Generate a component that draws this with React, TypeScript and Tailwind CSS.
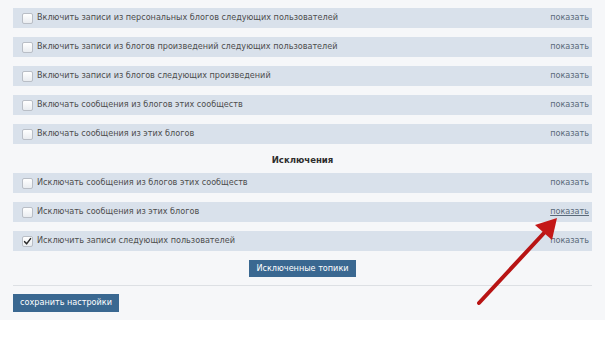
import React from 'react';

type Row = { label: string; checked?: boolean; hover?: boolean };

const includeRows: Row[] = [
  { label: 'Включить записи из персональных блогов следующих пользователей' },
  { label: 'Включить записи из блогов произведений следующих пользователей' },
  { label: 'Включить записи из блогов следующих произведений' },
  { label: 'Включать сообщения из блогов этих сообществ' },
  { label: 'Включать сообщения из этих блогов' },
];

const excludeRows: Row[] = [
  { label: 'Исключать сообщения из блогов этих сообществ' },
  { label: 'Исключать сообщения из этих блогов', hover: true },
  { label: 'Исключить записи следующих пользователей', checked: true },
];

function Checkbox({ checked }: { checked?: boolean }) {
  return (
    <span className="flex h-[11px] w-[11px] shrink-0 items-center justify-center rounded-[2px] border border-[#b9bec6] bg-gradient-to-b from-[#ffffff] to-[#e9ecf0]">
      {checked && (
        <svg viewBox="0 0 10 10" className="h-[9px] w-[9px]">
          <path d="M1.8 5.2 L4 7.6 L8.4 1.8" fill="none" stroke="#2b2b2b" strokeWidth="1.7" strokeLinecap="round" strokeLinejoin="round" />
        </svg>
      )}
    </span>
  );
}

function FilterRow({ row }: { row: Row }) {
  return (
    <div className="flex h-[20px] items-center bg-[#d9e1eb] pl-[9px] pr-[3px]">
      <Checkbox checked={row.checked} />
      <span className="ml-[4px] flex-1 text-[#4d4d4d]">{row.label}</span>
      <a href="#" className={`text-[#5a6a7a] ${row.hover ? 'underline' : ''}`}>
        показать
      </a>
    </div>
  );
}

export default function App() {
  return (
    <div
      className="relative h-[339px] w-[605px] overflow-hidden bg-white text-[9px]"
      style={{ fontFamily: '"DejaVu Sans Condensed", "DejaVu Sans", Verdana, sans-serif' }}
    >
      <div className="bg-[#f6f7f9] px-[13px] pb-[8px] pt-[8px]">
        <div className="flex flex-col gap-[9px]">
          {includeRows.map((r) => (
            <FilterRow key={r.label} row={r} />
          ))}
        </div>

        <div className="mt-[6px] mb-[3px] flex h-[20px] items-center justify-center text-[9.5px] font-bold text-[#2e2e2e]">
          Исключения
        </div>

        <div className="flex flex-col gap-[9px]">
          {excludeRows.map((r) => (
            <FilterRow key={r.label} row={r} />
          ))}
        </div>

        <div className="mt-[9px] flex justify-center">
          <button className="h-[17px] w-[107px] bg-[#3a6891] text-[#ffffff]">Исключенные топики</button>
        </div>

        <div className="mt-[8px] h-px bg-[#dde0e4]" />

        <div className="mt-[8px]">
          <button className="h-[18px] w-[106px] bg-[#3a6891] text-[#ffffff]">сохранить настройки</button>
        </div>
      </div>

      {/* red arrow pointing at the link */}
      <svg className="pointer-events-none absolute left-0 top-0" width="605" height="339" viewBox="0 0 605 339">
        <line x1="479" y1="303" x2="544" y2="233" stroke="#b81414" strokeWidth="4" strokeLinecap="round" />
        <polygon points="557,218 552,240 535,225" fill="#c41818" />
      </svg>
    </div>
  );
}
